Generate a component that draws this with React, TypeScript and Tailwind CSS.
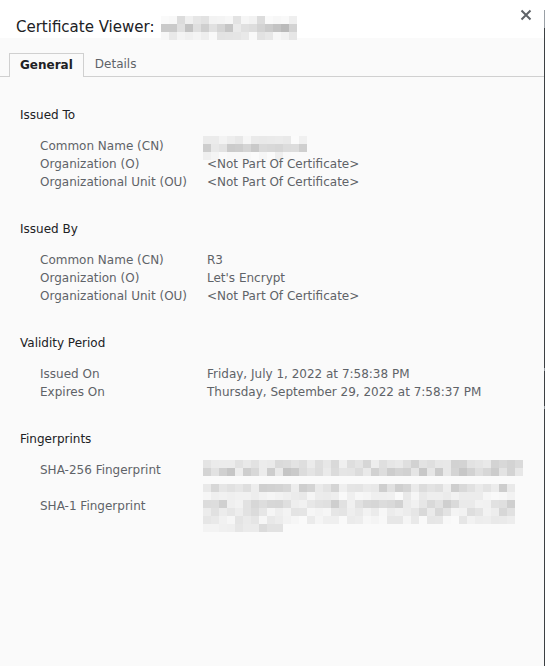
import React from 'react';

// deterministic noise so the redacted blocks look the same every render
const noise = (seed: number, i: number) => {
  const x = Math.sin(seed * 9301 + i * 49297) * 233280;
  return x - Math.floor(x);
};

interface BlurProps {
  cols: number;
  rows: { shade: [number, number]; len?: number }[];
  seed: number;
  cell?: number;
  className?: string;
}

// pixelated stand-in for redacted text
const Blur: React.FC<BlurProps> = ({ cols, rows, seed, cell = 8, className }) => (
  <svg width={cols * cell} height={rows.length * cell} className={className}>
    {rows.map((row, r) =>
      Array.from({ length: row.len ?? cols }).map((_, c) => {
        const n = noise(seed + r * 17, c);
        const [lo, hi] = row.shade;
        const v = Math.round(hi - n * (hi - lo));
        return (
          <rect
            key={`${r}-${c}`}
            x={c * cell}
            y={r * cell}
            width={cell}
            height={cell}
            fill={`rgb(${v},${v},${v})`}
          />
        );
      })
    )}
  </svg>
);

interface Row {
  label: string;
  value: React.ReactNode;
}

const Section: React.FC<{ title: string; rows: Row[] }> = ({ title, rows }) => (
  <div className="mb-[29px]">
    <div className="text-[12px] leading-[18px] text-[#202124]">{title}</div>
    <div className="mt-[13px]">
      {rows.map(row => (
        <div key={row.label} className="flex text-[12px] leading-[18px] text-[#5f6368]">
          <div className="w-[187px] pl-5 shrink-0 whitespace-nowrap">{row.label}</div>
          <div className="whitespace-nowrap">{row.value}</div>
        </div>
      ))}
    </div>
  </div>
);

export default function App() {
  const nap = '<Not Part Of Certificate>';

  return (
    <div
      className="w-[545px] h-[666px] flex bg-[#fafafa] overflow-hidden"
      style={{ fontFamily: '"DejaVu Sans", Verdana, sans-serif' }}
    >
      <div className="flex-1 flex flex-col">
        {/* Title bar */}
        <div className="h-[38px] bg-white flex items-start pl-4 pr-3">
          <div className="flex items-start">
            <span className="text-[15px] leading-[20px] mt-[17px] text-[#202124] whitespace-pre">
              Certificate Viewer:
            </span>
            <Blur
              className="mt-[16px] ml-[7px]"
              cols={17}
              seed={3}
              rows={[
                { shade: [215, 250] },
                { shade: [185, 235] },
                { shade: [225, 252] },
              ]}
            />
          </div>
          <button className="ml-auto mt-[9px] text-[#5f6368]">
            <svg width="12" height="12" viewBox="0 0 12 12">
              <path d="M1.5 1.5 L10.5 10.5 M10.5 1.5 L1.5 10.5" stroke="currentColor" strokeWidth="2" />
            </svg>
          </button>
        </div>

        {/* Tabs */}
        <div className="mt-[15px] flex border-b border-[#d0d0d0] pl-[9px] h-[24px]">
          <div className="h-[24px] -mb-px px-[10px] border border-b-0 border-[#d0d0d0] bg-[#fafafa] text-[12px] leading-[22px] font-bold text-[#202124]">
            General
          </div>
          <div className="px-[11px] text-[12px] leading-[22px] text-[#5f6368]">Details</div>
        </div>

        {/* Content */}
        <div className="pl-5 pt-[29px]">
          <Section
            title="Issued To"
            rows={[
              {
                label: 'Common Name (CN)',
                value: (
                  <Blur
                    className="-ml-[4px] -mt-[1px] -mb-[5px]"
                    cols={13}
                    seed={11}
                    rows={[
                      { shade: [232, 252] },
                      { shade: [200, 232] },
                      { shade: [238, 252] },
                    ]}
                  />
                ),
              },
              { label: 'Organization (O)', value: nap },
              { label: 'Organizational Unit (OU)', value: nap },
            ]}
          />
          <Section
            title="Issued By"
            rows={[
              { label: 'Common Name (CN)', value: 'R3' },
              { label: 'Organization (O)', value: "Let's Encrypt" },
              { label: 'Organizational Unit (OU)', value: nap },
            ]}
          />
          <Section
            title="Validity Period"
            rows={[
              { label: 'Issued On', value: 'Friday, July 1, 2022 at 7:58:38 PM' },
              { label: 'Expires On', value: 'Thursday, September 29, 2022 at 7:58:37 PM' },
            ]}
          />

          {/* Fingerprints */}
          <div>
            <div className="text-[12px] leading-[18px] text-[#202124]">Fingerprints</div>
            <div className="mt-[13px] flex text-[12px] leading-[18px] text-[#5f6368]">
              <div className="w-[183px] pl-5 shrink-0">
                <div className="h-[36px]">SHA-256 Fingerprint</div>
                <div className="h-[36px]">SHA-1 Fingerprint</div>
              </div>
              <div className="-mt-[1px] flex flex-col">
                <Blur
                  cols={40}
                  seed={21}
                  rows={[{ shade: [210, 240] }, { shade: [195, 238] }]}
                />
                <Blur
                  className="mt-[8px]"
                  cols={39}
                  seed={37}
                  rows={[
                    { shade: [205, 240] },
                    { shade: [232, 250] },
                    { shade: [205, 242] },
                    { shade: [215, 248] },
                    { shade: [228, 250] },
                    { shade: [215, 245], len: 10 },
                  ]}
                />
              </div>
            </div>
          </div>
        </div>
      </div>

      {/* right window edge */}
      <div className="w-px shrink-0 flex flex-col">
        <div className="h-[10px] bg-white" />
        <div className="h-[18px] bg-[#9aa0a6]" />
        <div className="h-[340px] bg-[#3c4043]" />
        <div className="h-[3px] bg-[#9aa0a6]" />
        <div className="h-[35px] bg-[#3c4043]" />
        <div className="h-[3px] bg-[#9aa0a6]" />
        <div className="flex-1 bg-[#3c4043]" />
      </div>
    </div>
  );
}
